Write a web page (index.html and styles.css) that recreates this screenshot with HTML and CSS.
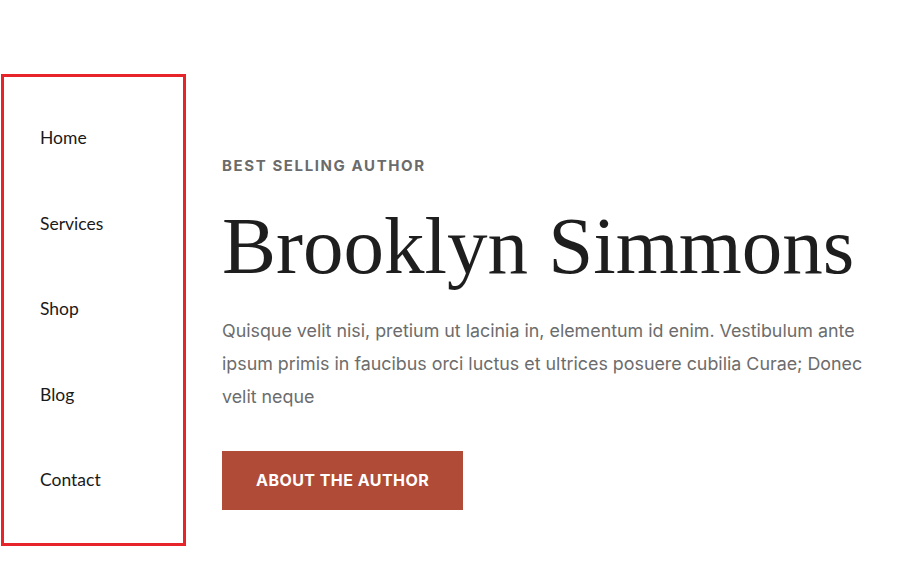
FILE: index.html
```html
<!DOCTYPE html>
<html lang="en">
<head>
<meta charset="utf-8">
<title>Brooklyn Simmons</title>
<link rel="stylesheet" href="styles.css">
</head>
<body>
<div class="page">
  <nav class="side-nav">
    <ul class="nav-list">
      <li class="nav-item"><a href="#">Home</a></li>
      <li class="nav-item"><a href="#">Services</a></li>
      <li class="nav-item"><a href="#">Shop</a></li>
      <li class="nav-item"><a href="#">Blog</a></li>
      <li class="nav-item"><a href="#">Contact</a></li>
    </ul>
  </nav>
  <main class="hero">
    <p class="eyebrow">BEST SELLING AUTHOR</p>
    <h1 class="title">Brooklyn Simmons</h1>
    <p class="lead">Quisque velit nisi, pretium ut lacinia in, elementum id enim. Vestibulum ante ipsum primis in faucibus orci luctus et ultrices posuere cubilia Curae; Donec velit neque</p>
    <a class="btn" href="#">ABOUT THE AUTHOR</a>
  </main>
</div>
</body>
</html>
```
FILE: styles.css
```css
html, body {
  margin: 0;
  padding: 0;
  background: #ffffff;
}

.page {
  display: flex;
  align-items: flex-start;
  padding: 74px 0 0 1px;
}

.side-nav {
  box-sizing: border-box;
  width: 185px;
  height: 472px;
  border: 3px solid #e8242b;
  flex: none;
}

.nav-list {
  list-style: none;
  margin: 0;
  padding: 18px 0 0 36px;
}

.nav-item {
  height: 85.5px;
  line-height: 85.5px;
}

.nav-item a {
  font-family: Lato, "Noto Sans", sans-serif;
  font-size: 17.5px;
  color: #1a1a1a;
  text-decoration: none;
}

.hero {
  margin-left: 36px;
  width: 650px;
}

.eyebrow {
  margin: 81px 0 0;
  font-family: Inter, "Liberation Sans", sans-serif;
  font-weight: 700;
  font-size: 15px;
  line-height: 22px;
  letter-spacing: 1.6px;
  color: #6b6b6b;
}

.title {
  margin: 25px 0 0;
  font-family: "Liberation Serif", "Times New Roman", serif;
  font-weight: 400;
  font-size: 81px;
  line-height: 88px;
  color: #1e1e1e;
  white-space: nowrap;
}

.lead {
  margin: 24px 0 0;
  font-family: Inter, "Liberation Sans", sans-serif;
  font-size: 17.85px;
  line-height: 33px;
  color: #6c6c6c;
}

.btn {
  display: inline-block;
  margin-top: 38px;
  height: 59px;
  line-height: 59px;
  padding: 0 34px;
  background: #b04b38;
  color: #ffffff;
  font-family: Inter, "Liberation Sans", sans-serif;
  font-weight: 700;
  font-size: 16px;
  letter-spacing: 0.45px;
  text-decoration: none;
}
```
